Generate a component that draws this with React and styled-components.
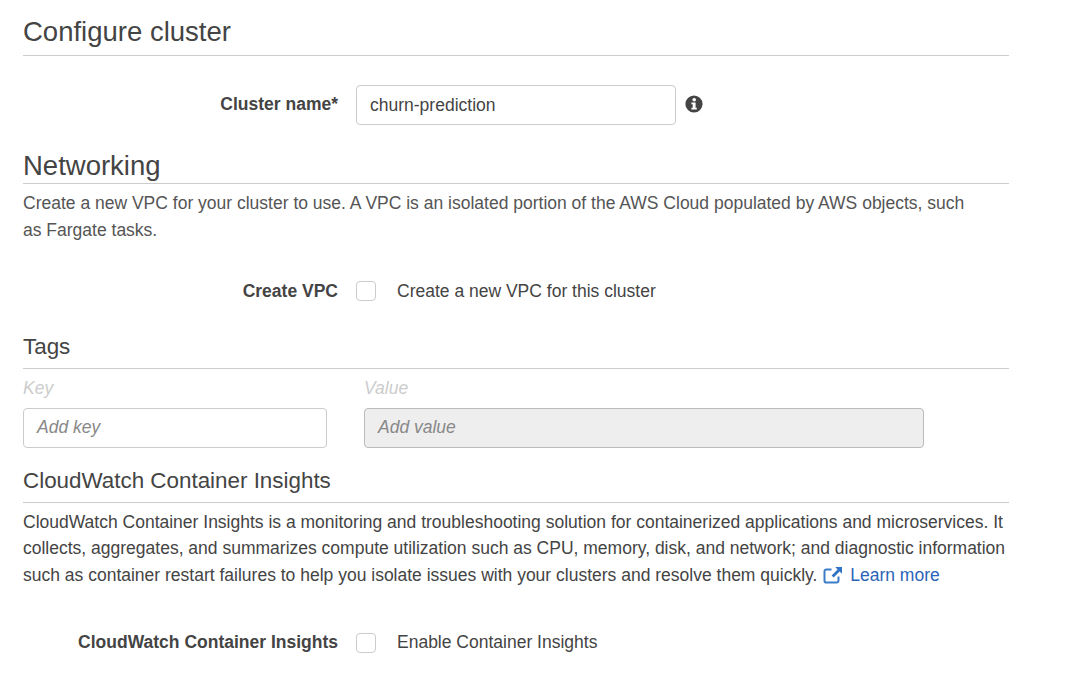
import React from "react";
import styled, { createGlobalStyle } from "styled-components";

const Global = createGlobalStyle`
  html, body { margin: 0; padding: 0; background: #fff; }
  body { font-family: "Liberation Sans", Arial, sans-serif; color: #444; font-size: 17.5px; }
`;
const Page = styled.div`
  width: 986px;
  padding: 14px 0 0 23px;
`;
const Heading = styled.h2`
  margin: 0;
  font-weight: 400;
  color: #444;
  font-size: ${(p) => p.$size}px;
  line-height: ${(p) => p.$lh}px;
  padding-bottom: ${(p) => p.$pb}px;
  margin-top: ${(p) => p.$mt}px;
  border-bottom: 1px solid #ccc;
`;
const Row = styled.div`
  display: flex;
  align-items: center;
  margin-top: ${(p) => p.$mt}px;
  height: ${(p) => p.$h}px;
`;
const Label = styled.label`
  width: 315px;
  text-align: right;
  font-weight: 700;
  color: #444;
  margin-right: 18px;
  margin-bottom: ${(p) => p.$lift || 0}px;
  flex: none;
`;
const TextInput = styled.div`
  box-sizing: border-box;
  height: 40px;
  width: ${(p) => p.$w}px;
  border: 1px solid ${(p) => (p.$disabled ? "#bbb" : "#ccc")};
  border-radius: 4px;
  background: ${(p) => (p.$disabled ? "#eee" : "#fff")};
  padding: 0 13px ${(p) => (p.$placeholder ? 2 : 0)}px;
  display: flex;
  align-items: center;
  color: ${(p) => (p.$placeholder ? "#888" : "#444")};
  font-style: ${(p) => (p.$placeholder ? "italic" : "normal")};
  flex: none;
`;
const InfoIcon = styled.svg`
  width: 18px;
  height: 18px;
  margin: 0 0 2px 9px;
  flex: none;
`;
const Description = styled.p`
  margin: ${(p) => p.$mt}px 0 0;
  line-height: 26.5px;
  color: ${(p) => p.$color};
  width: ${(p) => p.$w}px;
`;
const Check = styled.span`
  box-sizing: border-box;
  width: 20px;
  height: 20px;
  border: 1px solid #ccc;
  border-radius: 4px;
  background: #fff;
  flex: none;
  margin-right: 21px;
`;
const CheckText = styled.span`
  color: #444;
`;
const TagGrid = styled.div`
  display: grid;
  grid-template-columns: 304px 560px;
  column-gap: 37px;
  margin-top: 8px;
`;
const TagLabel = styled.div`
  font-style: italic;
  color: #ccc;
  line-height: 22px;
  margin-bottom: 9px;
`;
const LearnMore = styled.a`
  color: #2a64b8;
  text-decoration: none;
`;
const ExtIcon = styled.svg`
  width: 20px;
  height: 18px;
  margin: 0 7px 0 1px;
  vertical-align: -3px;
`;

export default function App() {
  return (
    <Page>
      <Global />
      <Heading $size={27.5} $lh={35} $pb={6} $mt={0}>Configure cluster</Heading>
      <Row $mt={29} $h={40}>
        <Label $lift={2}>Cluster name*</Label>
        <TextInput $w={320}>churn-prediction</TextInput>
        <InfoIcon viewBox="0 0 18 18" aria-hidden="true">
          <circle cx="9" cy="9" r="8.6" fill="#444" />
          <circle cx="9.2" cy="4.7" r="1.8" fill="#fff" />
          <path d="M6.4 7.4h4.2v5.4h1.2v1.8H6.4v-1.8h1.3V9.2H6.4z" fill="#fff" />
        </InfoIcon>
      </Row>
      <Heading $size={27.5} $lh={34} $pb={0} $mt={24}>Networking</Heading>
      <Description $mt={6} $w={950} $color="#555">
        Create a new VPC for your cluster to use. A VPC is an isolated portion of the AWS Cloud populated by AWS objects, such as Fargate tasks.
      </Description>
      <Row $mt={37} $h={22}>
        <Label>Create VPC</Label>
        <Check />
        <CheckText>Create a new VPC for this cluster</CheckText>
      </Row>
      <Heading $size={22.4} $lh={32} $pb={5} $mt={29}>Tags</Heading>
      <TagGrid>
        <div>
          <TagLabel>Key</TagLabel>
          <TextInput $w={304} $placeholder>Add key</TextInput>
        </div>
        <div>
          <TagLabel>Value</TagLabel>
          <TextInput $w={560} $placeholder $disabled>Add value</TextInput>
        </div>
      </TagGrid>
      <Heading $size={22.4} $lh={32} $pb={5} $mt={17}>CloudWatch Container Insights</Heading>
      <Description $mt={5.5} $w={986} $color="#444">
        CloudWatch Container Insights is a monitoring and troubleshooting solution for containerized applications and microservices. It collects, aggregates, and summarizes compute utilization such as CPU, memory, disk, and network; and diagnostic information such as container restart failures to help you isolate issues with your clusters and resolve them quickly.{" "}
        <ExtIcon viewBox="0 0 20 18" aria-hidden="true">
          <path d="M15.5 10.5v4.2a1.8 1.8 0 0 1-1.8 1.8H3.3a1.8 1.8 0 0 1-1.8-1.8V5.3a1.8 1.8 0 0 1 1.8-1.8h5.2" fill="none" stroke="#3b7dc9" strokeWidth="2" />
          <path d="M12.2 1h6.8v6.8l-2.4-2.4-6 6-2-2 6-6z" fill="#2f73c4" />
        </ExtIcon>
        <LearnMore href="#">Learn more</LearnMore>
      </Description>
      <Row $mt={43.5} $h={22}>
        <Label>CloudWatch Container Insights</Label>
        <Check />
        <CheckText>Enable Container Insights</CheckText>
      </Row>
    </Page>
  );
}
